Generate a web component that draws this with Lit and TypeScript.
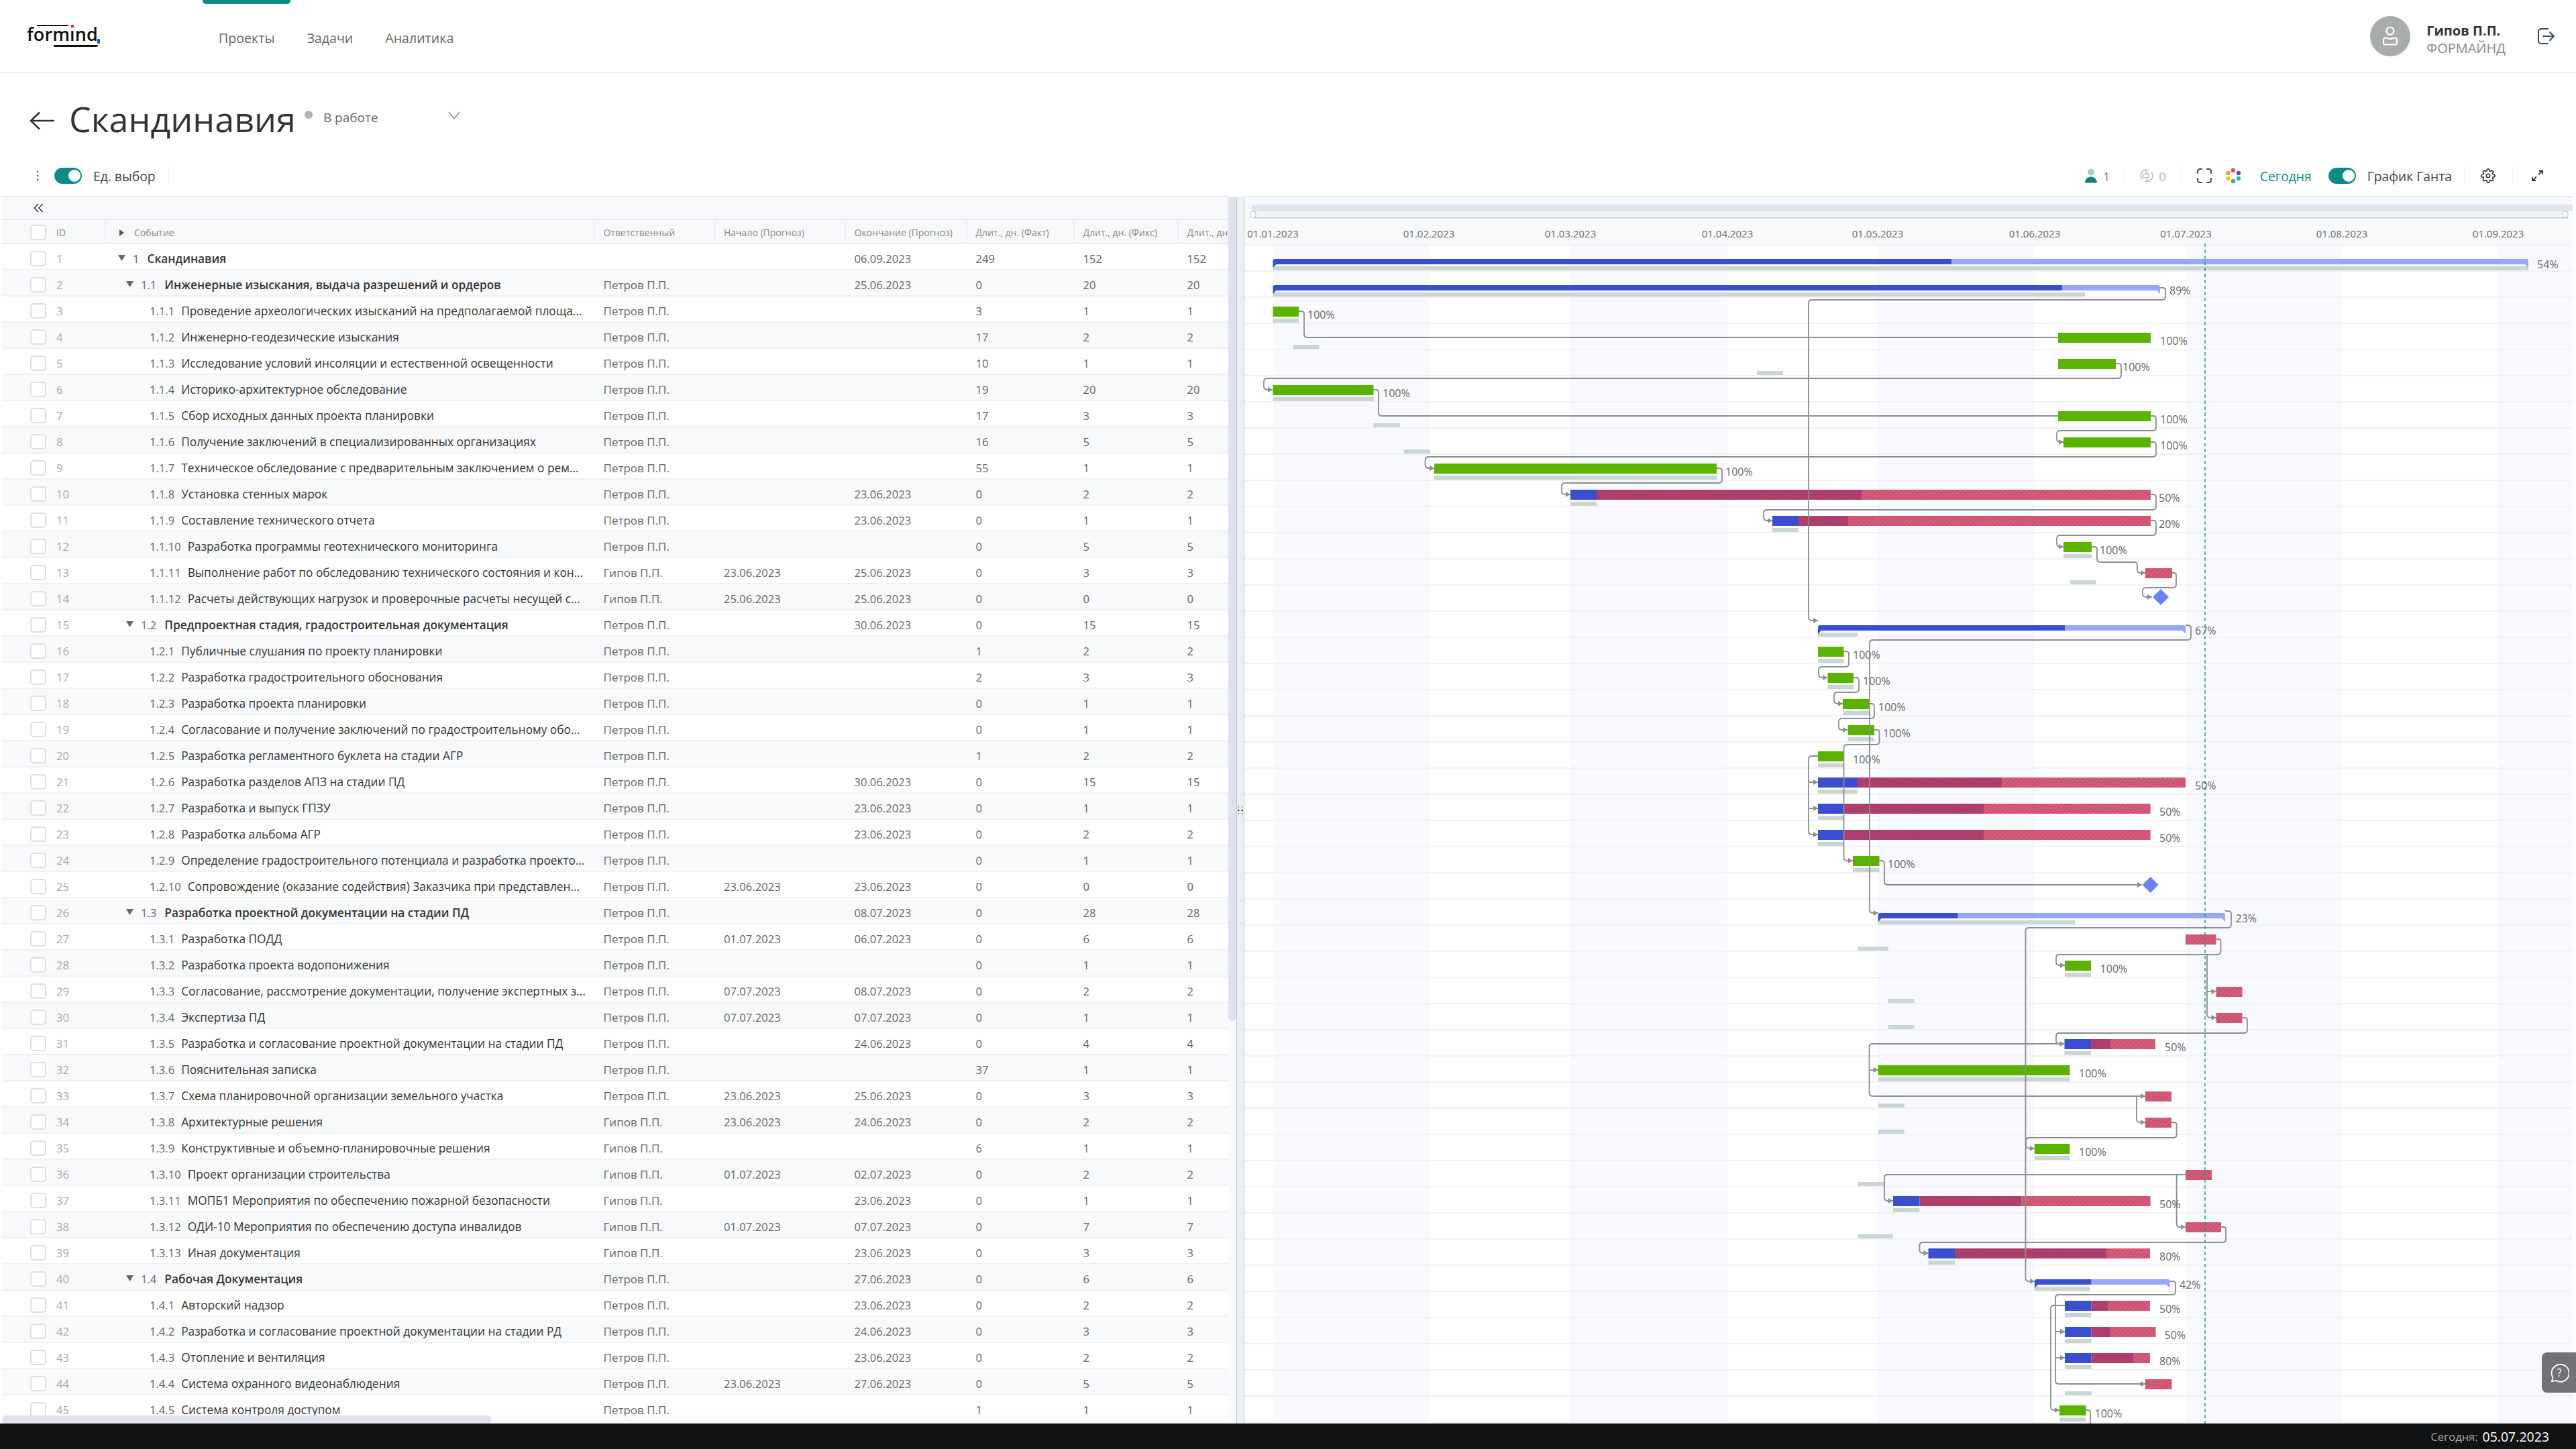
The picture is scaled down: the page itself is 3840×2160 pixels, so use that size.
import { LitElement, html, svg, css } from "lit";
import { customElement } from "lit/decorators.js";

const P = "Петров П.П.";
const G = "Гипов П.П.";
type R = [number, string, string, string, string, string, string, string];
const D1 = "23.06.2023";
// level, prefix, name, resp, start, end, fact, fix
const ROWS: R[] = [
  [0, "1", "Скандинавия", "", "", "06.09.2023", "249", "152"],
  [1, "1.1", "Инженерные изыскания, выдача разрешений и ордеров", P, "", "25.06.2023", "0", "20"],
  [2, "1.1.1", "Проведение археологических изысканий на предполагаемой площа...", P, "", "", "3", "1"],
  [2, "1.1.2", "Инженерно-геодезические изыскания", P, "", "", "17", "2"],
  [2, "1.1.3", "Исследование условий инсоляции и естественной освещенности", P, "", "", "10", "1"],
  [2, "1.1.4", "Историко-архитектурное обследование", P, "", "", "19", "20"],
  [2, "1.1.5", "Сбор исходных данных проекта планировки", P, "", "", "17", "3"],
  [2, "1.1.6", "Получение заключений в специализированных организациях", P, "", "", "16", "5"],
  [2, "1.1.7", "Техническое обследование с предварительным заключением о рем...", P, "", "", "55", "1"],
  [2, "1.1.8", "Установка стенных марок", P, "", D1, "0", "2"],
  [2, "1.1.9", "Составление технического отчета", P, "", D1, "0", "1"],
  [2, "1.1.10", "Разработка программы геотехнического мониторинга", P, "", "", "0", "5"],
  [2, "1.1.11", "Выполнение работ по обследованию технического состояния и кон...", G, D1, "25.06.2023", "0", "3"],
  [2, "1.1.12", "Расчеты действующих нагрузок и проверочные расчеты несущей с...", G, "25.06.2023", "25.06.2023", "0", "0"],
  [1, "1.2", "Предпроектная стадия, градостроительная документация", P, "", "30.06.2023", "0", "15"],
  [2, "1.2.1", "Публичные слушания по проекту планировки", P, "", "", "1", "2"],
  [2, "1.2.2", "Разработка градостроительного обоснования", P, "", "", "2", "3"],
  [2, "1.2.3", "Разработка проекта планировки", P, "", "", "0", "1"],
  [2, "1.2.4", "Согласование и получение заключений по градостроительному обо...", P, "", "", "0", "1"],
  [2, "1.2.5", "Разработка регламентного буклета на стадии АГР", P, "", "", "1", "2"],
  [2, "1.2.6", "Разработка разделов АПЗ на стадии ПД", P, "", "30.06.2023", "0", "15"],
  [2, "1.2.7", "Разработка и выпуск ГПЗУ", P, "", D1, "0", "1"],
  [2, "1.2.8", "Разработка альбома АГР", P, "", D1, "0", "2"],
  [2, "1.2.9", "Определение градостроительного потенциала и разработка проекто...", P, "", "", "0", "1"],
  [2, "1.2.10", "Сопровождение (оказание содействия) Заказчика при представлен...", P, D1, D1, "0", "0"],
  [1, "1.3", "Разработка проектной документации на стадии ПД", P, "", "08.07.2023", "0", "28"],
  [2, "1.3.1", "Разработка ПОДД", P, "01.07.2023", "06.07.2023", "0", "6"],
  [2, "1.3.2", "Разработка проекта водопонижения", P, "", "", "0", "1"],
  [2, "1.3.3", "Согласование, рассмотрение документации, получение экспертных з...", P, "07.07.2023", "08.07.2023", "0", "2"],
  [2, "1.3.4", "Экспертиза ПД", P, "07.07.2023", "07.07.2023", "0", "1"],
  [2, "1.3.5", "Разработка и согласование проектной документации на стадии ПД", P, "", "24.06.2023", "0", "4"],
  [2, "1.3.6", "Пояснительная записка", P, "", "", "37", "1"],
  [2, "1.3.7", "Схема планировочной организации земельного участка", P, D1, "25.06.2023", "0", "3"],
  [2, "1.3.8", "Архитектурные решения", G, D1, "24.06.2023", "0", "2"],
  [2, "1.3.9", "Конструктивные и объемно-планировочные решения", G, "", "", "6", "1"],
  [2, "1.3.10", "Проект организации строительства", G, "01.07.2023", "02.07.2023", "0", "2"],
  [2, "1.3.11", "МОПБ1 Мероприятия по обеспечению пожарной безопасности", G, "", D1, "0", "1"],
  [2, "1.3.12", "ОДИ-10 Мероприятия по обеспечению доступа инвалидов", G, "01.07.2023", "07.07.2023", "0", "7"],
  [2, "1.3.13", "Иная документация", G, "", D1, "0", "3"],
  [1, "1.4", "Рабочая Документация", P, "", "27.06.2023", "0", "6"],
  [2, "1.4.1", "Авторский надзор", P, "", D1, "0", "2"],
  [2, "1.4.2", "Разработка и согласование проектной документации на стадии РД", P, "", "24.06.2023", "0", "3"],
  [2, "1.4.3", "Отопление и вентиляция", P, "", D1, "0", "2"],
  [2, "1.4.4", "Система охранного видеонаблюдения", P, D1, "27.06.2023", "0", "5"],
  [2, "1.4.5", "Система контроля доступом", P, "", "", "1", "1"],
];

const HEAD = ["Ответственный", "Начало (Прогноз)", "Окончание (Прогноз)", "Длит., дн. (Факт)", "Длит., дн. (Фикс)", "Длит., дн"];

const top = (i: number) => 364 + i * 39;

// summary bars: row, start, progress end, end, baseline start, baseline end, label, label x
const SUMS: [number, number, number, number, number, number, string, number][] = [
  [0, 1897.5, 2909, 3769, 1897.5, 3769, "54%", 3782],
  [1, 1897.5, 3074, 3220, 1897.5, 3108, "89%", 3234],
  [14, 2710, 3078, 3258, 2710, 2769, "67%", 3272],
  [25, 2799.7, 2918.7, 3317, 2799.7, 3093, "23%", 3332.5],
  [39, 3033, 3117.5, 3234.5, 3033, 3115, "42%", 3249],
];
// green: row, x1, x2, baseline start, baseline end, label x
const GREEN: [number, number, number, number, number, number][] = [
  [2, 1897.5, 1936, 1897.5, 1936, 1949],
  [3, 3068, 3206, 1927.5, 1966.5, 3220],
  [4, 3068, 3154, 2619, 2658, 3164],
  [5, 1897.5, 2047.5, 1897.5, 2047.5, 2061],
  [6, 3068, 3206, 2047.5, 2087, 3220],
  [7, 3076, 3206, 2093, 2132, 3220],
  [8, 2138, 2559, 2138, 2559, 2572],
  [11, 3076, 3118, 3076, 3118, 3130],
  [15, 2710, 2748.5, 2710, 2748.5, 2762],
  [16, 2724.5, 2763, 2724.5, 2763, 2777],
  [17, 2747, 2786, 2747, 2786, 2800],
  [18, 2754.6, 2794, 2754.6, 2794, 2807],
  [19, 2710, 2748.5, 2710, 2748.5, 2762],
  [23, 2762, 2801.5, 2762, 2801.5, 2814],
  [27, 3078, 3117, 3078, 3117, 3130.6],
  [31, 2799.7, 3085.4, 2799.7, 3085.4, 3099],
  [34, 3032.8, 3085.4, 3032.8, 3085.4, 3099],
  [44, 3070, 3109.5, 3070, 3109.5, 3122.5],
];
// progress bars: row, x1, blue end, dark end, x2, baseline start, baseline end, label, label x
const PROG: [number, number, number, number, number, number, number, string, number][] = [
  [9, 2341, 2380, 2775, 3206, 2341, 2380, "50%", 3218],
  [10, 2642, 2681, 2755, 3206, 2642, 2681, "20%", 3218],
  [20, 2710, 2769, 2984, 3258, 2710, 2769, "50%", 3272],
  [21, 2710, 2748.5, 2957, 3205.6, 2710, 2748.5, "50%", 3219],
  [22, 2710, 2748.5, 2957, 3205.6, 2710, 2748.5, "50%", 3219],
  [30, 3077.5, 3117, 3146, 3213, 3077.5, 3117, "50%", 3227],
  [36, 2822, 2861.5, 3013.7, 3205.6, 2822, 2861.5, "50%", 3219],
  [38, 2874.5, 2914, 3140, 3205, 2874.5, 2914, "80%", 3219],
  [40, 3078, 3117.5, 3142, 3205, 3078, 3117.5, "50%", 3219],
  [41, 3078, 3117.5, 3145, 3213.5, 3078, 3117.5, "50%", 3226.5],
  [42, 3078, 3117.5, 3180, 3205, 3078, 3117.5, "80%", 3219],
];
// pure red: row, x1, x2, baseline start, baseline end
const RED: [number, number, number, number, number][] = [
  [12, 3198, 3238, 3086, 3124.5],
  [26, 3258, 3303.5, 2769.5, 2814.7],
  [28, 3303.5, 3342.5, 2814.7, 2853.6],
  [29, 3303.5, 3342.5, 2814.7, 2853.6],
  [32, 3198, 3237, 2799.7, 2838.7],
  [33, 3198, 3237, 2799.7, 2838.7],
  [35, 3258, 3297, 2769.5, 2808],
  [37, 3258, 3311, 2769, 2822],
  [43, 3198, 3237.5, 3078, 3117.5],
];
const DIAMONDS: [number, number][] = [[3221, 890], [3205.6, 1319]];
// polylines: points + whether it ends in an arrow
const LINKS: [number[], boolean][] = [
  [[1936, 464, 1944, 464, 1944, 503, 3068, 503], false],
  [[3220, 429, 3228, 429, 3228, 447, 2696, 447, 2696, 925, 2710, 925], true],
  [[3154, 542, 3162, 542, 3162, 564, 1884, 564, 1884, 581, 1897, 581], true],
  [[2047, 581, 2055, 581, 2055, 620, 3068, 620], false],
  [[3206, 620, 3214, 620, 3214, 642, 3066, 642, 3066, 659, 3076, 659], true],
  [[3206, 659, 3214, 659, 3214, 681, 2124.6, 681, 2124.6, 698, 2138, 698], true],
  [[2559, 698, 2567, 698, 2567, 720, 2328, 720, 2328, 737, 2341, 737], true],
  [[3206, 737, 3214, 737, 3214, 760, 2629, 760, 2629, 776, 2642, 776], true],
  [[3206, 776, 3214, 776, 3214, 798, 3066, 798, 3066, 815, 3076, 815], true],
  [[3118, 815, 3126, 815, 3126, 838, 3186, 838, 3186, 854, 3198, 854], true],
  [[3238, 854, 3244, 854, 3244, 876, 3194, 876, 3194, 890, 3208, 890], true],
  [[3258, 932, 3266, 932, 3266, 954, 2787, 954, 2787, 1361, 2799.7, 1361], true],
  [[2748, 971, 2756, 971, 2756, 994, 2711, 994, 2711, 1010, 2724, 1010], true],
  [[2763, 1010, 2771, 1010, 2771, 1032, 2734, 1032, 2734, 1049, 2747, 1049], true],
  [[2786, 1049, 2794, 1049, 2794, 1071, 2741, 1071, 2741, 1088, 2754, 1088], true],
  [[2794, 1088, 2801.5, 1088, 2801.5, 1110, 2748.5, 1110, 2748.5, 1283, 2762, 1283], true],
  [[2710, 1127, 2696, 1127, 2696, 1244, 2710, 1244], true],
  [[2696, 1166, 2710, 1166], true],
  [[2696, 1205, 2710, 1205], true],
  [[2801.5, 1283, 2809, 1283, 2809, 1319, 3193, 1319], true],
  [[3317, 1358, 3326, 1358, 3326, 1383, 3019.5, 1383, 3019.5, 1910, 3033, 1910], true],
  [[3303.5, 1400, 3310.5, 1400, 3310.5, 1423, 3065, 1423, 3065, 1439, 3078, 1439], true],
  [[3290, 1423, 3290, 1517, 3303.5, 1517], true],
  [[3290, 1478, 3303.5, 1478], true],
  [[3342.5, 1517, 3350, 1517, 3350, 1540, 3065, 1540, 3065, 1556, 3077.5, 1556], true],
  [[3077.5, 1556, 2786.5, 1556, 2786.5, 1634, 3198, 1634], true],
  [[2786.5, 1595, 2799.7, 1595], true],
  [[3185, 1634, 3185, 1673, 3198, 1673], true],
  [[3237, 1673, 3244.6, 1673, 3244.6, 1696, 3020, 1696, 3020, 1712, 3032.8, 1712], true],
  [[3258, 1751, 2809, 1751, 2809, 1790, 2822, 1790], true],
  [[3244.6, 1751, 3244.6, 1829, 3258, 1829], true],
  [[3311, 1829, 3318, 1829, 3318, 1852, 2861.5, 1852, 2861.5, 1868, 2874.5, 1868], true],
  [[3234.5, 1910, 3243, 1910, 3243, 1930, 3064, 1930, 3064, 2063, 3198, 2063], true],
  [[3064, 1985, 3078, 1985], true],
  [[3064, 2024, 3078, 2024], true],
  [[3078, 1946, 3057, 1946, 3057, 2102, 3070, 2102], true],
  [[3109.5, 2102, 3116, 2102, 3116, 2122], false],
];

function rounded(p: number[], r = 5) {
  let d = `M${p[0]} ${p[1]}`;
  for (let k = 2; k < p.length - 2; k += 2) {
    const [ax, ay, bx, by, cx, cy] = [p[k - 2], p[k - 1], p[k], p[k + 1], p[k + 2], p[k + 3]];
    const l1 = Math.hypot(bx - ax, by - ay), l2 = Math.hypot(cx - bx, cy - by);
    const q = Math.min(r, l1 / 2, l2 / 2);
    d += ` L${bx - ((bx - ax) / l1) * q} ${by - ((by - ay) / l1) * q}`;
    d += ` Q${bx} ${by} ${bx + ((cx - bx) / l2) * q} ${by + ((cy - by) / l2) * q}`;
  }
  return d + ` L${p[p.length - 2]} ${p[p.length - 1]}`;
}

const MONTHS: [string, number][] = [
  ["01.01.2023", 1897.5], ["01.02.2023", 2130], ["01.03.2023", 2341], ["01.04.2023", 2575],
  ["01.05.2023", 2799], ["01.06.2023", 3033], ["01.07.2023", 3258.5], ["01.08.2023", 3491], ["01.09.2023", 3724],
];

@customElement("app-root")
export class AppRoot extends LitElement {
  static styles = css`
    :host { display: block; width: 3840px; height: 2160px; overflow: hidden; background: #fff; font-family: "Open Sans", "Noto Sans", sans-serif; color: #333; }
    .app { display: flex; flex-direction: column; height: 2160px; }
    .nav { height: 107px; display: flex; align-items: center; padding-left: 40px; padding-right: 32px; border-bottom: 2px solid #f0f0f2; flex: none; }
    .logo { position: relative; width: 109px; height: 36px; margin-right: 153px; color: #111; }
    .logo-text { position: absolute; left: 0; top: -3px; font-size: 27px; font-weight: 600; line-height: 36px; letter-spacing: .1px; }
    .logo-over { position: absolute; left: 15px; top: 1px; width: 47px; height: 2px; background: #111; }
    .logo-dot { position: absolute; left: 66px; top: 1px; width: 4px; height: 4px; background: #d6243b; }
    .logo-under { position: absolute; left: 40px; top: 31px; width: 66px; height: 3px; background: #111; border-radius: 0 0 3px 0; }
    .logo-comma { position: absolute; left: 105px; top: 22px; width: 4px; height: 7px; background: #1c4fa8; border-radius: 1px; }
    .tabs { display: flex; height: 100%; }
    .tab { position: relative; display: flex; align-items: center; padding: 5px 24px 0; font-size: 19.6px; color: #666; height: 100%; box-sizing: border-box; }
    .tab.on::before { content: ""; position: absolute; left: 0; right: 0; top: 0; height: 6px; background: #0e8a8a; border-radius: 0 0 5px 5px; }
    .user { margin-left: auto; display: flex; align-items: center; }
    .avatar { width: 60px; height: 60px; border-radius: 50%; background: #a8acad; display: flex; align-items: center; justify-content: center; margin-right: 24px; }
    .uinfo { margin-top: 10px; }
    .uname { font-size: 20px; font-weight: 700; color: #333; line-height: 26px; }
    .uorg { font-size: 20px; color: #888; line-height: 26px; }
    .logout { margin-left: 47px; display: block; }

    .title-row { height: 125px; display: flex; align-items: center; padding-left: 44px; flex: none; }
    .back { display: block; margin-right: 22px; margin-top: 16px; }
    .title { font-size: 52px; line-height: 64px; color: #333; margin-top: 11px; }
    .sdot { width: 12px; height: 12px; border-radius: 50%; background: #b5b5b5; margin-left: 13px; margin-top: -1px; }
    .status { font-size: 19px; color: #666; margin-left: 16px; margin-top: 6px; width: 186px; }
    .chev { display: block; margin-top: 1px; }

    .toolbar { height: 58px; box-sizing: border-box; padding-bottom: 2px; display: flex; align-items: center; padding-left: 54px; padding-right: 49px; flex: none; font-size: 19.3px; }
    .kebab { width: 4px; display: block; margin-right: 23px; }
    .toggle { position: relative; width: 41px; height: 24px; border-radius: 12px; background: #0e8a8a; flex: none; }
    .toggle::after { content: ""; position: absolute; right: 2px; top: 3px; width: 18px; height: 18px; background: #fff; border-radius: 50%; }
    .single { margin-left: 17px; color: #444; }
    .vsep { width: 1px; height: 26px; background: #f0f0f2; flex: none; }
    .vsep.first { margin-left: 19px; }
    .tools { margin-left: auto; display: flex; align-items: center; }
    .tools svg { display: block; flex: none; }
    .ct { color: #777; font-size: 18.5px; }
    .ct.off { color: #bbb; }
    .today-btn { color: #0e8a8a; }
    .gantt-lbl { color: #444; }

    .main { flex: 1; min-height: 0; display: flex; padding-left: 3px; padding-right: 5px; position: relative; }
    .tpane { position: relative; width: 1828px; overflow: hidden; flex: none; border-top: 2px solid #e8e9ec; box-sizing: border-box; }
    .collapse { height: 34px; box-sizing: border-box; background: #f7f8fa; border-bottom: 2px solid #e8e9ec; display: flex; align-items: center; padding-left: 47px; }
    .collapse svg { display: block; }
    .thead, .tr { display: grid; grid-template-columns: 155px 729px 179.5px 194.5px 181px 160px 155px 180px; width: 1934px; align-items: center; box-sizing: border-box; }
    .thead { height: 36px; background: #f7f8fa; border-bottom: 2px solid #e8e9ec; color: #888; font-size: 14px; }
    .tr { height: 39px; border-bottom: 2px solid #f0f1f3; font-size: 16.6px; color: #666; padding-top: 5px; }
    .tr.alt { background: #f8f9fb; }
    .cell { padding-left: 12.5px; white-space: nowrap; overflow: hidden; box-sizing: border-box; }
    .thead .cell { height: 100%; display: flex; align-items: center; border-right: 2px solid #eeeff2; padding-top: 3px; }
    .thead .cell:last-child { border-right: none; }
    .cid { display: flex; align-items: center; padding-left: 42px; color: #aaa; overflow: visible; }
    .thead .cid { color: #888; }
    .check { width: 24px; height: 23px; box-sizing: border-box; border: 2px solid #dedfe2; border-radius: 5px; background: #fff; margin-right: 15px; flex: none; }
    .cname { display: flex; align-items: center; padding-left: 0; }
    .l0 { padding-left: 18px; }
    .l1 { padding-left: 30px; }
    .l2 { padding-left: 65px; }
    .thead .cname { padding-left: 20px; }
    .tri { width: 22px; flex: none; display: block; }
    .pre { color: #666; margin-right: 10px; }
    .nm { color: #333; font-size: 17.3px; }
    .resp { font-size: 17px; }
    .bold { font-weight: 600; margin-left: 2px; }
    .hscroll { position: absolute; left: 0; bottom: 0; width: 730px; height: 12px; border-radius: 6px; background: rgba(222, 225, 238, .9); }
    .hl { position: absolute; left: 0; right: 0; bottom: 0; height: 12px; background: rgba(246, 247, 249, .8); }
    .vbar { width: 12px; flex: none; background: #f9fafd; margin-top: 2px; }
    .vthumb { height: 1228px; background: #dfe1ec; border-radius: 0 0 6px 6px; }
    .split { width: 12px; box-sizing: border-box; flex: none; display: flex; align-items: center; justify-content: center; background: #edf0f2; border-left: 1px solid #c4c7cc; border-right: 1px solid #c4c7cc; margin-top: 2px; }
    .split svg { display: block; }
    .gantt { flex: 1; overflow: hidden; }
    .gantt svg { display: block; font-family: "Open Sans", "Noto Sans", sans-serif; }
    .foot { height: 38px; background: #111214; flex: none; display: flex; align-items: center; justify-content: flex-end; padding-right: 40px; font-size: 16.5px; color: #a9a9a9; }
    .foot b { font-weight: 400; color: #fff; font-size: 19.5px; margin-left: 7px; }
    .help { position: absolute; right: 0; bottom: 46px; width: 51px; height: 60px; background: #707276; border-radius: 8px 0 0 8px; display: flex; align-items: center; justify-content: center; }
    .help svg { display: block; }
  `;

  private gantt() {
    const rows = Array.from({ length: 46 }, (_, i) => top(i));
    const shade = [[1897.5, 2130], [2341, 2575], [2799, 3033], [3258.5, 3491], [3724, 3840]];
    const bl = (i: number, a: number, b: number) => svg`<rect x=${a} y=${top(i) + 33} width=${b - a} height="6" fill="#c9d6d3"/>`;
    const lbl = (i: number, x: number, t: string) => svg`<text x=${x} y=${top(i) + 33} font-size="16" fill="#666">${t}</text>`;
    const hatched = (y: number, a: number, b: number, p: string) => svg`<rect x=${a} y=${y} width=${b - a} height="15" fill=${`url(#${p})`}/>`;
    return svg`
      <svg width="1980" height="1830" viewBox="1855 292 1980 1830">
        <defs>
          <pattern id="hl" width="5" height="5" patternUnits="userSpaceOnUse" patternTransform="rotate(-45)">
            <rect width="5" height="5" fill="#d55d79"/><rect width="5" height="1.6" fill="#c64e6e"/>
          </pattern>
          <pattern id="hd" width="5" height="5" patternUnits="userSpaceOnUse" patternTransform="rotate(-45)">
            <rect width="5" height="5" fill="#b1406e"/><rect width="5" height="1.6" fill="#a53a6b"/>
          </pattern>
        </defs>
        <rect x="1855" y="292" width="1980" height="72" fill="#f8f9fb"/>
        <rect x="1855" y="292" width="1980" height="2" fill="#e8e9ec"/>
        ${shade.map(([a, b]) => svg`<rect x=${a} y="364" width=${b - a} height="1760" fill="#f8f9fc"/>`)}
        ${rows.map((y) => svg`<rect x="1855" y=${y} width="1980" height="2" fill="#f1f2f4"/>`)}
        <path d="M1866 315v-7a3 3 0 0 1 3-3h2954a3 3 0 0 1 3 3v7z" fill="#dfe4ee"/>
        <rect x="1868" y="315" width="1960" height="9" fill="#f0f7f3"/>
        <rect x="1868" y="324" width="1960" height="1.5" fill="#c5cbcd"/>
        <rect x="1864" y="315" width="8" height="9" rx="3" fill="#fff" stroke="#b9bfc2"/>
        <rect x="3820" y="315" width="8" height="9" rx="3" fill="#fff" stroke="#b9bfc2"/>
        ${MONTHS.map(([t, x]) => svg`<text x=${x} y="354" text-anchor="middle" font-size="15" fill="#666">${t}</text>`)}

        ${SUMS.map(([i, a, m, b, ba, bb]) => {
          const y = top(i) + 22;
          return svg`${bl(i, ba, bb)}
            <path d="M${m} ${y}L${b - 3} ${y}Q${b} ${y} ${b} ${y + 3}L${b} ${y + 13}L${b - 5} ${y + 8}L${m} ${y + 8}Z" fill="#98a7f8"/>
            <path d="M${a} ${y + 13}L${a} ${y + 3}Q${a} ${y} ${a + 3} ${y}L${m} ${y}L${m} ${y + 8}L${a + 5} ${y + 8}Z" fill="#3a4fd0"/>`;
        })}
        ${GREEN.map(([i, a, b, ba, bb]) => svg`${bl(i, ba, bb)}<rect x=${a} y=${top(i) + 15} width=${b - a} height="15" fill="#5bb300"/>`)}
        ${PROG.map(([i, a, c, d, b, ba, bb]) => {
          const y = top(i) + 15;
          return svg`${bl(i, ba, bb)}${hatched(y, c, d, "hd")}${hatched(y, d, b, "hl")}<rect x=${a} y=${y} width=${c - a} height="15" fill="#3a4fd0"/>`;
        })}
        ${RED.map(([i, a, b, ba, bb]) => svg`${bl(i, ba, bb)}${hatched(top(i) + 15, a, b, "hl")}`)}
        ${DIAMONDS.map(([x, y]) => svg`<path d="M${x} ${y - 12}L${x + 12} ${y}L${x} ${y + 12}L${x - 12} ${y}Z" fill="#6a82f6"/>`)}

        ${LINKS.map(([p, arrow]) => {
          const ex = p[p.length - 2], ey = p[p.length - 1];
          return svg`<path d=${rounded(p)} fill="none" stroke="#8a8e90" stroke-width="1.8"/>
            ${arrow ? svg`<path d="M${ex} ${ey}L${ex - 7} ${ey - 4}L${ex - 7} ${ey + 4}Z" fill="#8a8e90"/>` : ""}`;
        })}
        <line x1="3287" y1="363" x2="3287" y2="2122" stroke="#1c9a94" stroke-width="1.5" stroke-dasharray="5 4"/>

        ${SUMS.map(([i, , , , , , t, x]) => svg`<text x=${x} y=${top(i) + 35.5} font-size="16" fill="#666">${t}</text>`)}
        ${GREEN.map(([i, , , , , x]) => lbl(i, x, "100%"))}
        ${PROG.map(([i, , , , , , , t, x]) => lbl(i, x, t))}
      </svg>`;
  }

  render() {
    return html`
      <div class="app">
        <header class="nav">
          <div class="logo">
            <span class="logo-over"></span><span class="logo-dot"></span>
            <span class="logo-text">formınd</span>
            <span class="logo-under"></span><span class="logo-comma"></span>
          </div>
          <nav class="tabs">
            <div class="tab on">Проекты</div>
            <div class="tab">Задачи</div>
            <div class="tab">Аналитика</div>
          </nav>
          <div class="user">
            <div class="avatar">
              <svg width="26" height="30" viewBox="0 0 26 30" fill="none" stroke="#fff" stroke-width="2.2">
                <circle cx="13" cy="7" r="5.5"/>
                <path d="M3 20.5a3 3 0 0 1 3-3h1.5q5.5 3 11 0H20a3 3 0 0 1 3 3V25a2.5 2.5 0 0 1-2.5 2.5h-15A2.5 2.5 0 0 1 3 25z"/>
              </svg>
            </div>
            <div class="uinfo">
              <div class="uname">Гипов П.П.</div>
              <div class="uorg">ФОРМАЙНД</div>
            </div>
            <svg class="logout" width="26" height="26" viewBox="0 0 26 26" fill="none" stroke="#34495e" stroke-width="2" stroke-linecap="round" stroke-linejoin="round">
              <path d="M16 2H6a4 4 0 0 0-4 4v14a4 4 0 0 0 4 4h10"/><path d="M9 13h16M19 7l6 6-6 6"/>
            </svg>
          </div>
        </header>

        <div class="title-row">
          <svg class="back" width="37" height="28" viewBox="0 0 37 28" fill="none" stroke="#333" stroke-width="2.6">
            <path d="M37 14H2M15 1.5L2 14l13 12.5"/>
          </svg>
          <div class="title">Скандинавия</div>
          <span class="sdot"></span>
          <span class="status">В работе</span>
          <svg class="chev" width="18" height="12" viewBox="0 0 18 12" fill="none" stroke="#888" stroke-width="1.4"><path d="M1 1l8 10 8-10"/></svg>
        </div>

        <div class="toolbar">
          <svg class="kebab" width="4" height="16" viewBox="0 0 4 16" fill="#555"><circle cx="2" cy="2" r="1.3"/><circle cx="2" cy="8" r="1.3"/><circle cx="2" cy="14" r="1.3"/></svg>
          <span class="toggle"></span>
          <span class="single">Ед. выбор</span>
          <span class="vsep first"></span>
          <div class="tools">
            <svg width="20" height="22" viewBox="0 0 20 22"><circle cx="10" cy="5.5" r="5" fill="#9fd0cc"/><path d="M1 21.5c0-5 4-9 9-9s9 4 9 9z" fill="#12807c"/></svg>
            <span class="ct" style="margin-left:8px">1</span>
            <span class="vsep" style="margin-left:21px"></span>
            <svg style="margin-left:23px" width="20" height="22" viewBox="0 0 20 22" fill="none" stroke="#b5b5b5" stroke-width="1.4">
              <path d="M3 16A8.5 8.5 0 0 1 8 2.5M17 6a8.5 8.5 0 0 1-5 13.5"/><path d="M7 20l5-.5-2.500-3.500M13 2l-5 .5 2.500 3.500"/>
              <path d="M7 14a2.500 2.500 0 0 1 0-5q1-3 4-1.500 3 .5 2.500 3.500 0 3-3 3z"/>
            </svg>
            <span class="ct off" style="margin-left:8px">0</span>
            <span class="vsep" style="margin-left:21px"></span>
            <svg style="margin-left:24px" width="22" height="22" viewBox="0 0 22 22" fill="none" stroke="#444" stroke-width="2" stroke-linecap="round">
              <path d="M1 7V4.500A3.500 3.500 0 0 1 4.500 1H7M15 1h2.500A3.500 3.500 0 0 1 21 4.500V7M21 15v2.500a3.500 3.500 0 0 1-3.500 3.500H15M7 21H4.500A3.500 3.500 0 0 1 1 17.500V15"/>
            </svg>
            <svg style="margin-left:21px" width="22" height="24" viewBox="0 0 22 24">
              <circle cx="11" cy="4" r="3.2" fill="#e0544f"/><circle cx="19" cy="8" r="3.2" fill="#6c3fc9"/><circle cx="19" cy="16" r="3.2" fill="#27b3b3"/>
              <circle cx="11" cy="20" r="3.2" fill="#57a773"/><circle cx="3.500" cy="16" r="3.2" fill="#f5c518"/><circle cx="3.500" cy="8" r="3.2" fill="#ee9a3a"/>
            </svg>
            <span class="today-btn" style="margin-left:29px">Сегодня</span>
            <span class="toggle" style="margin-left:25px"></span>
            <span class="gantt-lbl" style="margin-left:17px">График Ганта</span>
            <span class="vsep" style="margin-left:18px"></span>
            <svg style="margin-left:24px" width="22" height="22" viewBox="0 0 24 24" fill="none" stroke="#333" stroke-width="1.8">
              <circle cx="12" cy="12" r="3"/>
              <path d="M19.400 15a1.650 1.650 0 0 0 .33 1.820l.06.06a2 2 0 0 1 0 2.830 2 2 0 0 1-2.830 0l-.06-.06a1.650 1.650 0 0 0-1.820-.33 1.650 1.650 0 0 0-1 1.510V21a2 2 0 0 1-2 2 2 2 0 0 1-2-2v-.09A1.650 1.650 0 0 0 9 19.400a1.650 1.650 0 0 0-1.820.33l-.06.06a2 2 0 0 1-2.830 0 2 2 0 0 1 0-2.830l.06-.06a1.650 1.650 0 0 0 .33-1.820 1.650 1.650 0 0 0-1.510-1H3a2 2 0 0 1-2-2 2 2 0 0 1 2-2h.09A1.650 1.650 0 0 0 4.600 9a1.650 1.650 0 0 0-.33-1.820l-.06-.06a2 2 0 0 1 0-2.830 2 2 0 0 1 2.830 0l.06.06a1.650 1.650 0 0 0 1.820.33H9a1.650 1.650 0 0 0 1-1.510V3a2 2 0 0 1 2-2 2 2 0 0 1 2 2v.09a1.650 1.650 0 0 0 1 1.510 1.650 1.650 0 0 0 1.820-.33l.06-.06a2 2 0 0 1 2.830 0 2 2 0 0 1 0 2.830l-.06.06a1.650 1.650 0 0 0-.33 1.820V9a1.650 1.650 0 0 0 1.510 1H21a2 2 0 0 1 2 2 2 2 0 0 1-2 2h-.09a1.650 1.650 0 0 0-1.510 1z"/>
            </svg>
            <span class="vsep" style="margin-left:25px"></span>
            <svg style="margin-left:28px" width="17" height="16" viewBox="0 0 17 16" fill="none" stroke="#222" stroke-width="1.7">
              <path d="M10 6.500l6-6M11 .8h5.200V6M7 9.500l-6 6M6 15.200H.8V10"/>
            </svg>
          </div>
        </div>

        <div class="main">
          <div class="tpane">
            <div class="collapse">
              <svg width="15" height="14" viewBox="0 0 15 14" fill="none" stroke="#333" stroke-width="1.5"><path d="M7 1L1.500 7 7 13M13.500 1L8 7l5.500 6"/></svg>
            </div>
            <div class="thead">
              <div class="cell cid"><span class="check"></span>ID</div>
              <div class="cell cname">
                <svg class="tri" width="22" height="12" viewBox="0 0 22 12" fill="#555"><path d="M0 1l7 5-7 5z"/></svg>
                <span>Событие</span>
              </div>
              ${HEAD.map((h) => html`<div class="cell">${h}</div>`)}
            </div>
            ${ROWS.map((r, i) => html`
              <div class="tr ${i % 2 ? "alt" : ""}">
                <div class="cell cid"><span class="check"></span>${i + 1}</div>
                <div class="cell cname l${r[0]}">
                  ${r[0] < 2 ? html`<svg class="tri" width="22" height="10" viewBox="0 0 22 10" fill="#666"><path d="M0 0h11L5.500 9z"/></svg>` : ""}
                  <span class="pre">${r[1]}</span>
                  <span class="nm ${r[0] < 2 ? "bold" : ""}">${r[2]}</span>
                </div>
                <div class="cell resp">${r[3]}</div>
                <div class="cell">${r[4]}</div>
                <div class="cell">${r[5]}</div>
                <div class="cell">${r[6]}</div>
                <div class="cell">${r[7]}</div>
                <div class="cell">${r[7]}</div>
              </div>
            `)}
            <div class="hl"></div>
            <div class="hscroll"></div>
          </div>
          <div class="vbar"><div class="vthumb"></div></div>
          <div class="split">
            <svg width="8" height="14" viewBox="0 0 8 14">
              <g fill="#999"><circle cx="1.200" cy="2" r="1"/><circle cx="1.200" cy="12" r="1"/><circle cx="6.800" cy="2" r="1"/><circle cx="6.800" cy="12" r="1"/></g>
              <g fill="#111"><circle cx="1.200" cy="7" r="1.200"/><circle cx="6.800" cy="7" r="1.200"/></g>
            </svg>
          </div>
          <div class="gantt">${this.gantt()}</div>
          <div class="help">
            <svg width="30" height="30" viewBox="0 0 30 30" fill="none" stroke="#fff" stroke-width="1.8">
              <path d="M4 28l1.500-5.500A13 13 0 1 1 10 27q-3 1-6 1z"/>
              <text x="15" y="20.500" text-anchor="middle" font-size="16" fill="#fff" stroke="none" font-family="Open Sans, sans-serif">?</text>
            </svg>
          </div>
        </div>
        <footer class="foot">Сегодня:<b>05.07.2023</b></footer>
      </div>
    `;
  }
}
